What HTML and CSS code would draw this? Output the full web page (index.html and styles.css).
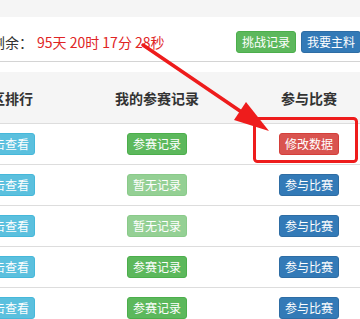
FILE: index.html
```html
<!DOCTYPE html>
<html lang="zh-CN">

<head>
  <meta charset="UTF-8" />
  <meta name="viewport" content="width=device-width, initial-scale=1.0" />
  <title>参赛记录</title>
  <link rel="stylesheet" href="styles.css">
</head>

<body>
  <div class="page">
    <div class="topbar">
      <div class="countdown">时间剩余：<span class="time">95天 20时 17分 28秒</span></div>
      <div class="actions">
        <a class="btn btn-success">挑战记录</a>
        <a class="btn btn-primary">我要主料</a>
      </div>
    </div>

    <div class="table-wrap">
      <table class="match-table">
        <thead>
          <tr>
            <th>赛区排行</th>
            <th>我的参赛记录</th>
            <th>参与比赛</th>
          </tr>
        </thead>
        <tbody>
          <tr>
            <td><a class="btn btn-info">点击查看</a></td>
            <td><a class="btn btn-success">参赛记录</a></td>
            <td><a class="btn btn-danger">修改数据</a></td>
          </tr>
          <tr>
            <td><a class="btn btn-info">点击查看</a></td>
            <td><a class="btn btn-success disabled">暂无记录</a></td>
            <td><a class="btn btn-primary">参与比赛</a></td>
          </tr>
          <tr>
            <td><a class="btn btn-info">点击查看</a></td>
            <td><a class="btn btn-success disabled">暂无记录</a></td>
            <td><a class="btn btn-primary">参与比赛</a></td>
          </tr>
          <tr>
            <td><a class="btn btn-info">点击查看</a></td>
            <td><a class="btn btn-success">参赛记录</a></td>
            <td><a class="btn btn-primary">参与比赛</a></td>
          </tr>
          <tr>
            <td><a class="btn btn-info">点击查看</a></td>
            <td><a class="btn btn-success">参赛记录</a></td>
            <td><a class="btn btn-primary">参与比赛</a></td>
          </tr>
        </tbody>
      </table>
    </div>
  </div>

  <!-- annotation drawn over the screenshot -->
  <svg class="mark" width="360" height="319" viewBox="0 0 360 319">
    <line x1="143" y1="45" x2="243" y2="113" stroke="#ee1c1c" stroke-width="3.5" stroke-linecap="round" />
    <polygon points="269,131 234,120 246,102" fill="#ee1c1c" />
    <rect x="254.5" y="118.5" width="102" height="43" rx="3" fill="none" stroke="#ee1c1c" stroke-width="3" />
  </svg>
</body>

</html>
```

FILE: styles.css
```css
body {
  margin: 0;
  padding: 0;
  font-family: "Noto Sans CJK SC", "Liberation Sans", sans-serif;
  font-size: 14px;
  background-color: #f5f5f5;
  color: #333;
  overflow: hidden;
  position: relative;
}

.page {
  padding-top: 17px;
}

.topbar {
  display: flex;
  align-items: center;
  justify-content: space-between;
  height: 44px;
  padding-top: 0;
  background: #fff;
  border-bottom: 1px solid #d4d4d4;
}

.countdown {
  margin-left: -37px;
  margin-top: 6px;
  line-height: 20px;
  white-space: nowrap;
}

.time {
  color: #e02424;
  margin-left: 4px;
}

.actions {
  display: flex;
  gap: 5px;
  margin-right: -1px;
  margin-top: 6px;
}

.btn {
  display: inline-block;
  padding: 1px 5px;
  font-size: 12px;
  line-height: 18px;
  border: 1px solid transparent;
  border-radius: 3px;
  color: #fff;
  white-space: nowrap;
  cursor: pointer;
}

.btn-success {
  background-color: #5cb85c;
  border-color: #4cae4c;
}

.btn-primary {
  background-color: #337ab7;
  border-color: #2e6da4;
}

.btn-info {
  background-color: #5bc0de;
  border-color: #46b8da;
}

.btn-danger {
  background-color: #d9534f;
  border-color: #d43f3a;
}

.btn.disabled {
  opacity: 0.65;
}

.table-wrap {
  background: #fff;
  padding-top: 10px;
  height: 300px;
}

.match-table {
  width: 456px;
  margin-left: -71px;
  border-collapse: collapse;
  table-layout: fixed;
}

.match-table th,
.match-table td {
  text-align: center;
  vertical-align: middle;
  border-bottom: 1px solid #ddd;
}

.match-table th {
  height: 51px;
  padding: 0 8px;
  background-color: #f5f5f5;
  font-weight: bold;
  font-size: 14px;
  color: #333;
}

.match-table td {
  height: 40px;
  padding: 0 8px;
}

.mark {
  position: absolute;
  top: 0;
  left: 0;
  pointer-events: none;
}
```
